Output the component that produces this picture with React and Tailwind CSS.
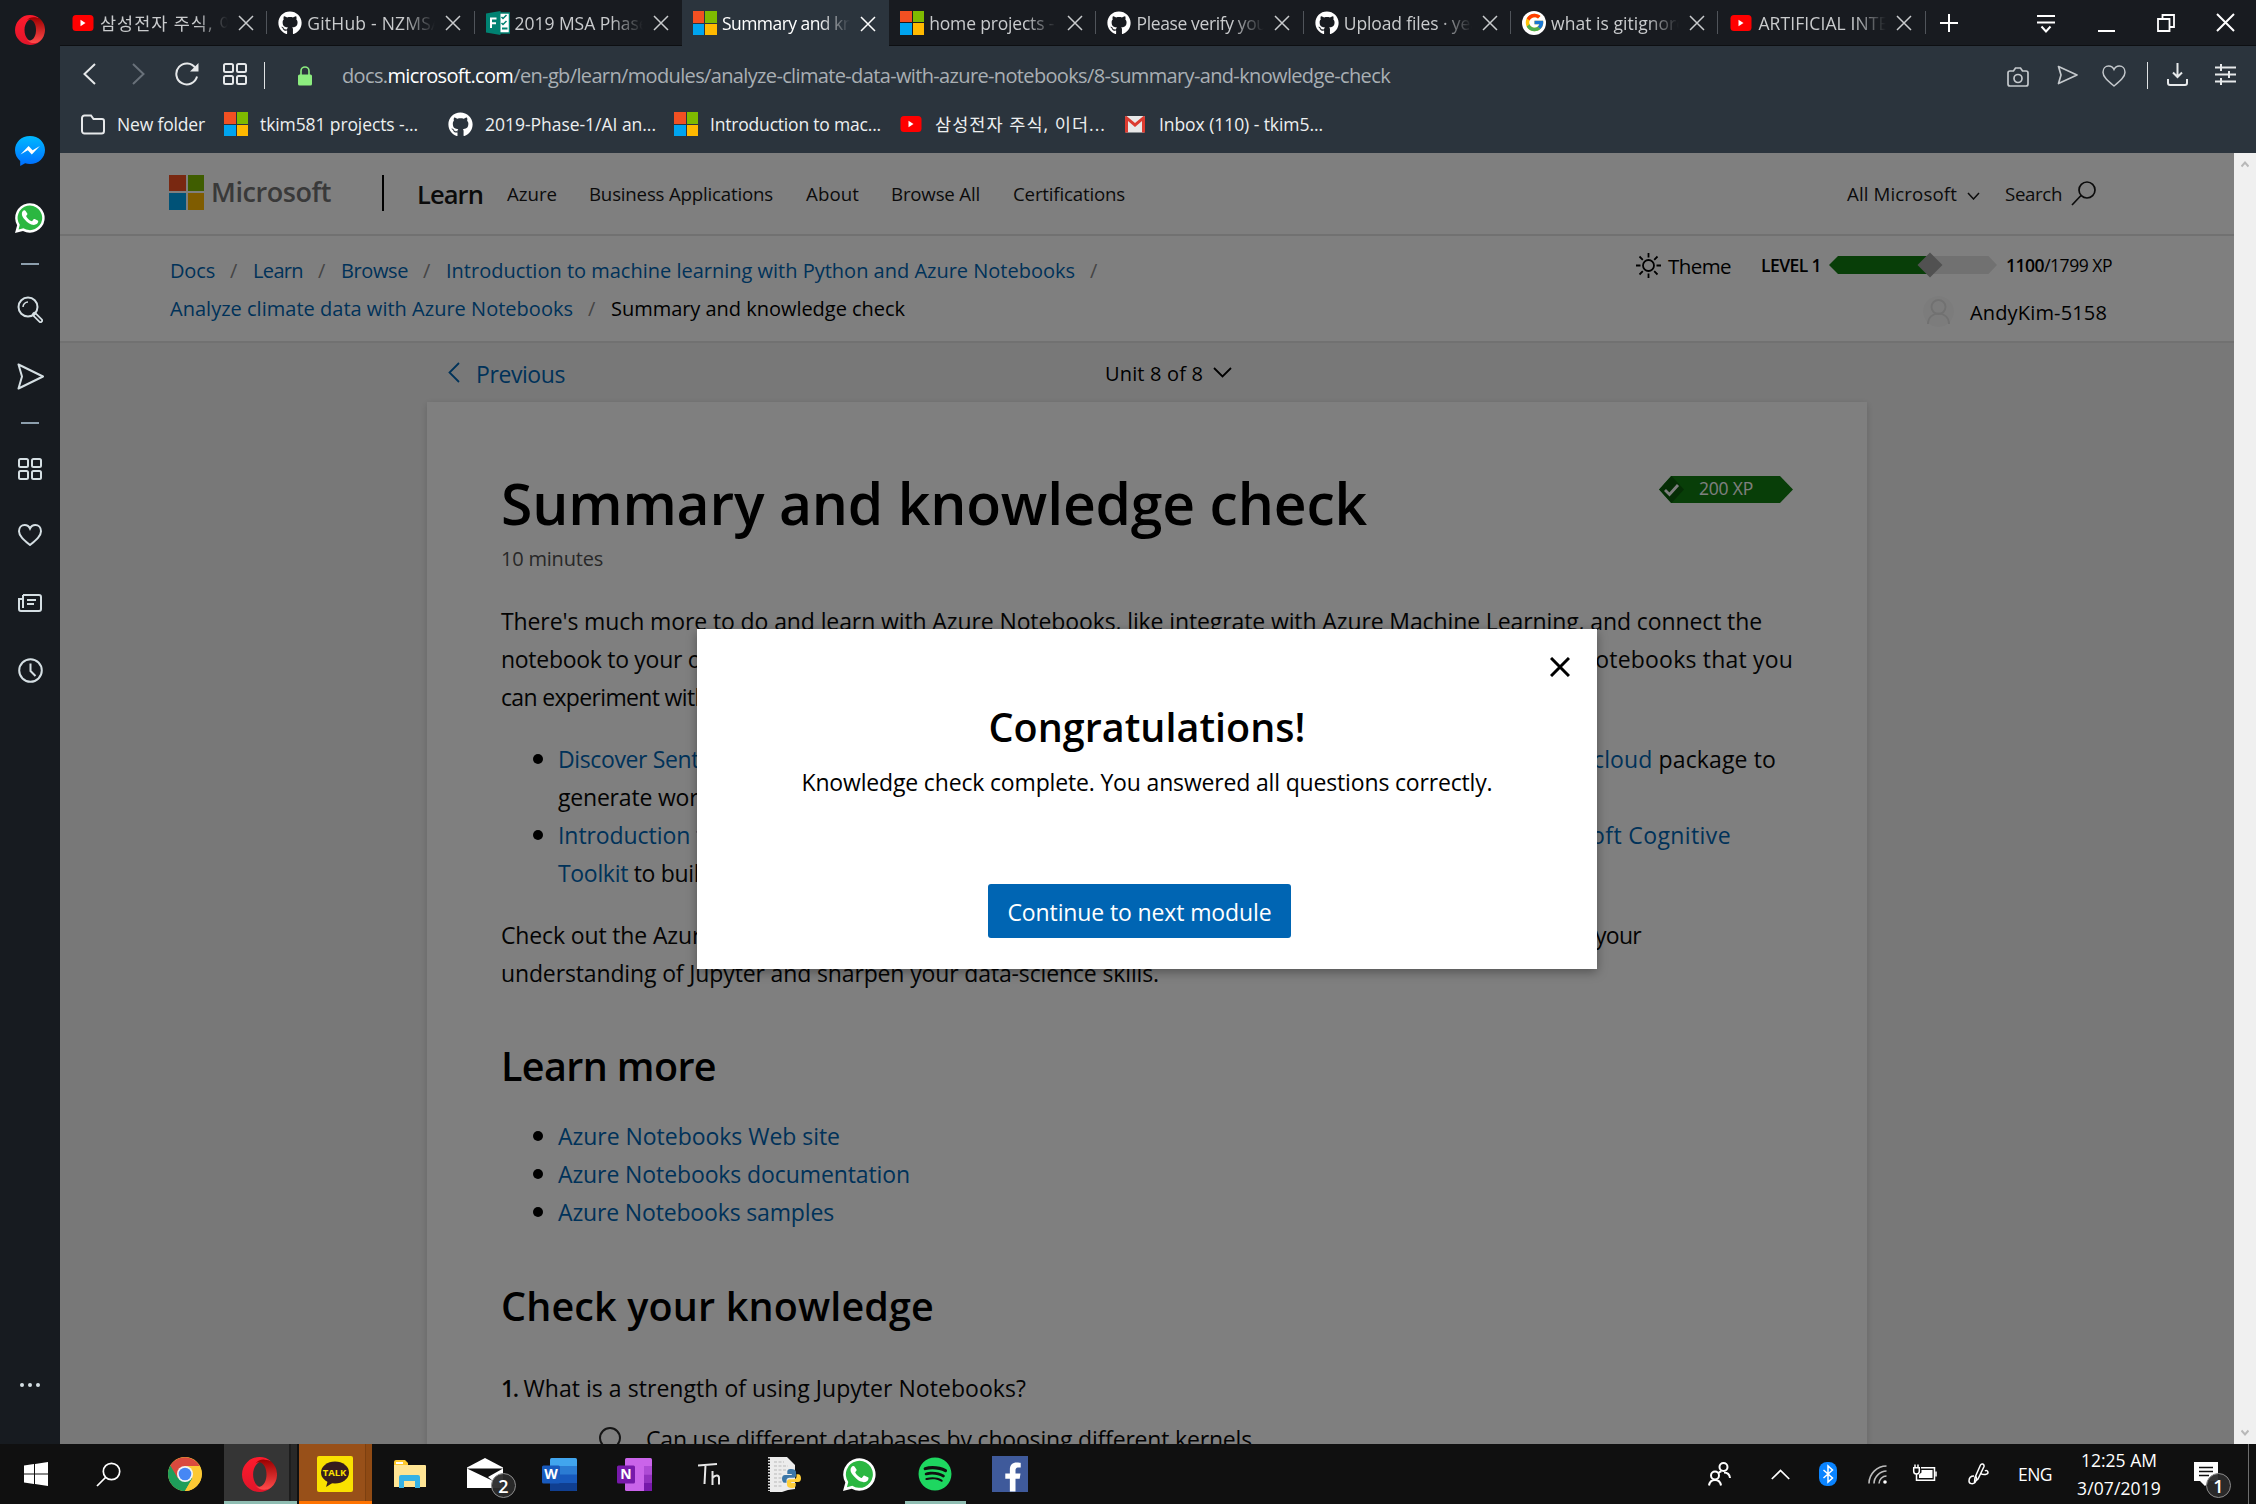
import React, { useLayoutEffect, useRef } from "react";
import { FaGithub, FaSpotify, FaFacebookF } from "react-icons/fa";
import { FcGoogle } from "react-icons/fc";

/* A single line of text whose letters are spread or tightened to fill `w` pixels. */
function Line({ w, className = "", children }) {
  const ref = useRef(null);
  useLayoutEffect(() => {
    const el = ref.current;
    el.style.letterSpacing = "0px";
    const natural = el.getBoundingClientRect().width;
    const count = el.textContent.length;
    el.style.letterSpacing = `${(w - natural) / count}px`;
  }, [w, children]);
  return (
    <span className={`block shrink-0 whitespace-pre ${className}`} style={{ width: w }}>
      <span ref={ref} className="inline-block">{children}</span>
    </span>
  );
}

function Svg({ w, h, className = "", children, ...rest }) {
  return (
    <svg width={w} height={h} viewBox={`0 0 ${w} ${h}`} className={`block shrink-0 ${className}`} fill="none" stroke="currentColor" strokeWidth="2" {...rest}>
      {children}
    </svg>
  );
}

/* ---------- brand marks ---------- */

const MsLogo = ({ className = "size-6 gap-px" }) => (
  <span className={`grid shrink-0 grid-cols-2 grid-rows-2 ${className}`}>
    <span className="bg-[#f25022]" />
    <span className="bg-[#7fba00]" />
    <span className="bg-[#00a4ef]" />
    <span className="bg-[#ffb900]" />
  </span>
);

const YouTube = () => (
  <Svg w={24} h={24} stroke="none">
    <rect x="1.5" y="4" width="21" height="16" rx="3.5" fill="#f00" />
    <path d="M9.5 8.8v6.4l5-3.2z" fill="#fff" />
  </Svg>
);

const Gmail = () => (
  <Svg w={24} h={24} stroke="none">
    <rect x="2" y="4" width="20" height="16.5" rx="1.5" fill="#e8e8e8" />
    <path d="M2 5.5C2 4.6 2.6 4 3.5 4L12 11l8.500-7c.9 0 1.500.6 1.500 1.500v15h-3V9l-7 6-7-6v11.500H2z" fill="#dc3b30" />
  </Svg>
);

const Forms = () => (
  <Svg w={24} h={24} stroke="none">
    <rect x="13" y="2" width="10.500" height="20" fill="#fff" stroke="#008272" strokeWidth="1.500" />
    <path d="M15.500 6l1.500 1.500 3.500-3.500M15.500 12l1.500 1.500 3.500-3.500" stroke="#008272" strokeWidth="1.500" />
    <path d="M16 17.500h5.500" stroke="#008272" strokeWidth="2" />
    <path d="M0 2.500L14.500 0v24L0 21.500z" fill="#008272" />
    <path d="M5 17V7.500h5.500M5 12.200h5" stroke="#fff" strokeWidth="2" />
  </Svg>
);

const Opera = ({ size = 30, id }) => (
  <svg width={size} height={size} viewBox="0 0 30 30" className="block shrink-0">
    <defs>
      <linearGradient id={`${id}a`} x1="0" y1="0" x2="0" y2="1">
        <stop offset="0" stopColor="#ff1b2d" />
        <stop offset="1" stopColor="#e0152a" />
      </linearGradient>
      <linearGradient id={`${id}b`} x1="0" y1="0" x2="0" y2="1">
        <stop offset="0" stopColor="#9c0000" />
        <stop offset="1" stopColor="#ff4b4b" />
      </linearGradient>
    </defs>
    <path d="M15 0a15 15 0 1 0 0 30 15 15 0 0 0 10-3.800c-7.500 3.500-15.500-1.500-15.500-11.200S17.500.300 25 3.800A15 15 0 0 0 15 0z" fill={`url(#${id}a)`} />
    <path d="M11.500 5.500C13.500 3 16.500 1.800 19.500 2.300c2.200.3 4 1 5.500 1.500a15 15 0 0 1 0 22.400c-4.500 3-10 2.500-13.500-1.700 1.200.9 2.400 1.200 3.500 1 4-.8 6-5.500 6-10.500s-2-9.700-6-10.500c-1.100-.2-2.300.1-3.500 1z" fill={`url(#${id}b)`} />
  </svg>
);

const WhatsApp = ({ size = 30 }) => (
  <svg width={size} height={size} viewBox="0 0 32 32" className="block shrink-0">
    <path d="M0 32l2.300-8.200A15.700 15.700 0 1 1 8.500 29.800z" fill="#fff" />
    <path d="M3.800 28.300l1.300-5A13.100 13.100 0 1 1 9 27z" fill="#2bb741" />
    <path d="M11.300 8.500c-.5-1-1-.9-1.700-.8-1.200.4-2.300 1.900-2.300 3.900 0 2.100 1.600 4.300 3.300 6.200 2.500 2.800 5.500 5.500 9.500 5.600 2.200 0 4.400-1.300 4.600-3.300.1-.8.100-1.100-.5-1.400l-3.200-1.600c-.5-.2-.9-.1-1.200.3l-1.400 1.700c-.3.400-.7.300-1.200.1-2.300-1-4.200-2.900-5.200-4.800-.2-.4 0-.7.200-1l.9-1.200c.2-.4.200-.6 0-1z" fill="#fff" />
  </svg>
);

const Messenger = () => (
  <svg width="30" height="30" viewBox="0 0 30 30" className="block">
    <defs>
      <linearGradient id="msgr" x1="0" y1="0" x2="0" y2="1">
        <stop offset="0" stopColor="#00b9ff" />
        <stop offset="1" stopColor="#006dff" />
      </linearGradient>
    </defs>
    <path d="M15 0C6.500 0 0 6.200 0 14c0 4.500 2 8.400 5.200 10.900V30l4.900-2.700c1.500.5 3.200.7 4.900.7 8.500 0 15-6.200 15-14S23.500 0 15 0z" fill="url(#msgr)" />
    <path d="M5.500 18.500l8.100-8.500 4 4.200 7.300-4.200-8.100 8.500-4-4.200z" fill="#fff" />
  </svg>
);

/* ---------- line icons ---------- */

const Cross = ({ size = 16, className = "", sw = 1.5 }) => (
  <Svg w={size} h={size} className={className} strokeWidth={sw}>
    <path d={`M1 1L${size - 1} ${size - 1}M${size - 1} 1L1 ${size - 1}`} />
  </Svg>
);

const Tiles = () => (
  <Svg w={24} h={22} strokeWidth="2">
    <rect x="1" y="1" width="9" height="8" rx="1.500" />
    <rect x="14" y="1" width="9" height="8" rx="1.500" />
    <rect x="1" y="13" width="9" height="8" rx="1.500" />
    <rect x="14" y="13" width="9" height="8" rx="1.500" />
  </Svg>
);

const Heart = ({ sw = 1.7 }) => (
  <Svg w={24} h={22} strokeWidth={sw}>
    <path d="M12 21C6 16 1 12 1 7.200 1 3.500 3.500 1 6.700 1 9 1 11 2.300 12 4.500 13 2.300 15 1 17.300 1 20.500 1 23 3.500 23 7.200 23 12 18 16 12 21z" />
  </Svg>
);

/* ---------- browser chrome ---------- */

const tabs = [
  { icon: <YouTube />, title: "삼성전자 주식, 이", wide: 136 },
  { icon: <FaGithub className="size-6 text-white" />, title: "GitHub - NZMSA", wide: 135 },
  { icon: <Forms />, title: "2019 MSA Phase", wide: 134 },
  { icon: <MsLogo />, title: "Summary and kn", wide: 131 },
  { icon: <MsLogo />, title: "home projects -", wide: 125 },
  { icon: <FaGithub className="size-6 text-white" />, title: "Please verify your", wide: 137 },
  { icon: <FaGithub className="size-6 text-white" />, title: "Upload files · yea", wide: 136 },
  { icon: <span className="grid size-6 place-items-center rounded-full bg-white"><FcGoogle className="size-[21px]" /></span>, title: "what is gitignore", wide: 135 },
  { icon: <YouTube />, title: "ARTIFICIAL INTE", wide: 130 },
];

function TabBar() {
  return (
    <div className="flex h-[46px] items-stretch border-b border-[#0d0f12] bg-[#181b20]">
      {tabs.map((t, i) => (
        <div key={i} className={`relative flex w-[207.300px] items-center pl-[11px] ${i === 3 ? "-mb-px bg-[#2b343d] text-white" : "text-[#c9cbcd]"}`}>
          {t.icon}
          <div className="ml-[5px] w-[128px] overflow-hidden [mask-image:linear-gradient(to_right,#000_75%,transparent)]">
            <Line w={t.wide} className="text-[17.500px] leading-[30px]">{t.title}</Line>
          </div>
          <Cross className="ml-[10px] mt-px" />
          {i !== 3 && i !== 2 && <span className="absolute right-0 top-[11px] h-[23px] w-px bg-[#50545a]" />}
        </div>
      ))}
      <div className="flex flex-1 items-center pl-[14px] text-white">
        <Svg w={18} h={18}><path d="M9 0v18M0 9h18" /></Svg>
        <Svg w={18} h={20} className="ml-[79px] mt-[3px]"><path d="M0 2h18M0 8.500h18M4.500 12.500l4.500 5 4.500-5" /></Svg>
        <span className="ml-[43px] mt-[17px] h-[2px] w-[17px] bg-white" />
        <Svg w={18} h={18} className="ml-[42px]" strokeWidth="1.800"><path d="M1 5h11.500v12H1zM5.500 5V1H17v12h-4.500" /></Svg>
        <Cross size={19} sw={2} className="ml-[41px]" />
      </div>
    </div>
  );
}

function AddressBar() {
  return (
    <div className="flex h-[60px] items-center pl-[22px] text-[#e6e8ea]">
      <Svg w={15} h={24} className="-mt-1"><path d="M13 2L2.500 12 13 22" /></Svg>
      <Svg w={15} h={24} className="-mt-1 ml-[34px] text-[#69717a]"><path d="M2 2l10.500 10L2 22" /></Svg>
      <Svg w={25} h={24} className="-mt-1 ml-[29px]">
        <path d="M20.500 6A10.500 10.500 0 1 0 22 14.500" />
        <path d="M23.500 1v8.500H15z" fill="currentColor" stroke="none" />
      </Svg>
      <div className="-mt-1 ml-[23px]"><Tiles /></div>
      <span className="-mt-0.5 ml-[17px] h-[27px] w-px bg-[#dfe2e4]" />
      <Svg w={14} h={20} className="ml-[33px] text-[#8ced7f]" strokeWidth="1.600">
        <path d="M3 9V5a4 4 0 0 1 8 0v4" />
        <rect x="0" y="8.500" width="14" height="11" rx="1.500" fill="currentColor" stroke="none" />
      </Svg>
      <Line w={1048} className="ml-[30px] text-[20px] leading-[30px] text-[#a9afb4]">
        docs.<span className="text-white">microsoft.com</span>/en-gb/learn/modules/analyze-climate-data-with-azure-notebooks/8-summary-and-knowledge-check
      </Line>
      <div className="-mt-0.5 ml-auto flex items-center pr-[20px]">
        <Svg w={22} h={20} className="mt-1 text-[#c4c8cc]" strokeWidth="1.700">
          <path d="M3 4h3.500l2-3h5l2 3H19a2 2 0 0 1 2 2v11a2 2 0 0 1-2 2H3a2 2 0 0 1-2-2V6a2 2 0 0 1 2-2z" />
          <circle cx="11" cy="11.500" r="4" />
        </Svg>
        <Svg w={21} h={20} className="ml-[28px] text-[#c4c8cc]" strokeWidth="1.700"><path d="M1.500 1.500L20 10 1.500 18.500 4 10z" strokeLinejoin="round" /></Svg>
        <div className="ml-[24px] mt-[2px] text-[#c4c8cc]"><Heart sw={1.5} /></div>
        <span className="ml-[21px] h-[27px] w-px bg-[#dfe2e4]" />
        <Svg w={21} h={23} className="-mt-0.5 ml-[19px]"><path d="M10.500 0v14M6 9.500l4.500 4.500L15 9.500M1 16v4a2 2 0 0 0 2 2h15a2 2 0 0 0 2-2v-4" /></Svg>
        <Svg w={21} h={23} className="-mt-0.5 ml-[27px]"><path d="M0 4.500h21M0 11.500h21M0 18.500h21M6 1v7M14 8v7M6 15v7" /></Svg>
      </div>
    </div>
  );
}

function Bookmark({ icon, w, gap, children }) {
  return (
    <div className={`flex items-center ${gap}`}>
      {icon}
      <Line w={w} className="ml-3 text-[17.500px] leading-[26px] text-[#edeff0]">{children}</Line>
    </div>
  );
}

function Bookmarks() {
  return (
    <div className="flex h-[47px] items-center pb-[11px] pl-[21px]">
      <Bookmark w={88} gap="mr-[19px]" icon={
        <Svg w={24} h={21} className="text-[#e6e8ea]"><path d="M1 4V17a2.500 2.500 0 0 0 2.500 2.500h17A2.500 2.500 0 0 0 23 17V7a2 2 0 0 0-2-2h-8.500L10 1.500H3.500A2.500 2.500 0 0 0 1 4z" /></Svg>
      }>New folder</Bookmark>
      <Bookmark w={158} gap="mr-[30px]" icon={<MsLogo />}>tkim581 projects -...</Bookmark>
      <Bookmark w={171} gap="mr-[18px]" icon={<FaGithub className="size-[25px] text-white" />}>2019-Phase-1/AI an...</Bookmark>
      <Bookmark w={171} gap="mr-[18px]" icon={<MsLogo />}>Introduction to mac...</Bookmark>
      <Bookmark w={171} gap="mr-[17px]" icon={<YouTube />}>삼성전자 주식, 이더...</Bookmark>
      <Bookmark w={164} gap="" icon={<Gmail />}>Inbox (110) - tkim5...</Bookmark>
    </div>
  );
}

function Sidebar() {
  return (
    <aside className="flex h-full w-[60px] shrink-0 flex-col items-center bg-[#171b20] pt-[15px] text-[#d5dfe3]">
      <Opera id="side" />
      <div className="mt-[91px]"><Messenger /></div>
      <div className="mt-[37px]"><WhatsApp /></div>
      <span className="mt-[30px] h-[2px] w-[18px] bg-[#8d9fad]" />
      <Svg w={26} h={27} className="mt-[31px]">
        <circle cx="11" cy="11" r="9.500" />
        <path d="M6 11a5 5 0 0 1 5-5" strokeWidth="1.500" />
        <path d="M17.500 18.500l6 6" strokeWidth="5" strokeLinecap="round" />
        <path d="M18.500 19.500l5 5" strokeWidth="1.500" stroke="#171b20" strokeLinecap="round" />
      </Svg>
      <Svg w={27} h={27} className="mt-[40px]"><path d="M1.500 1.500L26 13.500l-24.500 12 3.500-12z" strokeLinejoin="round" /></Svg>
      <span className="mt-[32px] h-[2px] w-[18px] bg-[#8d9fad]" />
      <div className="mt-[34px]"><Tiles /></div>
      <div className="mt-[44px]"><Heart sw={2} /></div>
      <Svg w={24} h={18} className="mt-[48px]">
        <path d="M5 1h16a2 2 0 0 1 2 2v12a2 2 0 0 1-2 2H3a2 2 0 0 1-2-2V5h4M5 1v13M9 6h9M9 10h7" />
      </Svg>
      <Svg w={25} h={25} className="mt-[46px]"><circle cx="12.500" cy="12.500" r="11.300" /><path d="M12.500 5.500V13l5 5" /></Svg>
      <div className="mt-auto flex gap-1 pb-[57px]">
        <span className="size-1 rounded-full bg-current" />
        <span className="size-1 rounded-full bg-current" />
        <span className="size-1 rounded-full bg-current" />
      </div>
    </aside>
  );
}

/* ---------- page ---------- */

function SiteHeader() {
  const nav = [
    ["Azure", 50, "ml-[24px]"],
    ["Business Applications", 184, "ml-[32px]"],
    ["About", 53, "ml-[33px]"],
    ["Browse All", 89, "ml-[32px]"],
    ["Certifications", 112, "ml-[33px]"],
  ];
  return (
    <header className="flex h-[83px] items-center border-b-2 border-[#e3e3e3] pb-[3px] pl-[109px] pr-[138px] text-[#171717]">
      <MsLogo className="size-[35px] gap-[2px]" />
      <Line w={120} className="ml-[7px] text-[27px] font-semibold leading-[40px] text-[#737373]">Microsoft</Line>
      <span className="ml-[51px] mt-[2px] h-[36px] w-[2px] bg-black" />
      <Line w={66} className="ml-[33px] mt-[3px] text-[25.500px] font-semibold leading-[40px]">Learn</Line>
      {nav.map(([t, w, m]) => (
        <Line key={t} w={w} className={`mt-[3px] text-[18.700px] leading-[30px] ${m}`}>{t}</Line>
      ))}
      <Line w={110} className="ml-auto mt-[3px] text-[18.700px] leading-[30px]">All Microsoft</Line>
      <Svg w={13} h={8} className="ml-[10px] mt-[8px]" strokeWidth="1.500"><path d="M1 1l5.500 6L12 1" /></Svg>
      <Line w={57} className="ml-[25px] mt-[3px] text-[18.700px] leading-[30px]">Search</Line>
      <Svg w={25} h={25} className="ml-[9px] mt-[2px]" strokeWidth="1.700"><circle cx="16" cy="9" r="8" /><path d="M10 14.500L1 24" /></Svg>
    </header>
  );
}

const Slash = ({ className }) => <span className={`block text-[20px] text-[#8a8a8a] ${className}`}>/</span>;

function Crumbs() {
  return (
    <section className="flex h-[107px] justify-between border-b-2 border-[#e3e3e3] pl-[110px] pr-[122px] text-[20px] leading-[38px]">
      <div className="pt-[16px] text-[#0065b3]">
        <div className="flex">
          <Line w={45}>Docs</Line><Slash className="ml-[15px] w-[23px]" />
          <Line w={50}>Learn</Line><Slash className="ml-[15px] w-[23px]" />
          <Line w={67}>Browse</Line><Slash className="ml-[15px] w-[23px]" />
          <Line w={629}>Introduction to machine learning with Python and Azure Notebooks</Line><Slash className="ml-[15px]" />
        </div>
        <div className="flex">
          <Line w={403}>Analyze climate data with Azure Notebooks</Line><Slash className="ml-[15px] w-[23px]" />
          <Line w={294} className="text-black">Summary and knowledge check</Line>
        </div>
      </div>
      <div className="flex flex-col items-end pt-[14px] leading-[28px]">
        <div className="flex items-center">
          <Svg w={25} h={25} className="text-black" strokeWidth="1.800">
            <circle cx="12.500" cy="12.500" r="5.500" />
            <path d="M12.500 0v4.500M12.500 20.500V25M0 12.500h4.500M20.500 12.500H25M3.500 3.500l3.300 3.300M18.200 18.200l3.300 3.300M3.500 21.500l3.300-3.300M18.200 6.800l3.300-3.300" />
          </Svg>
          <Line w={63} className="ml-[7px] mt-[2px] text-[20.500px]">Theme</Line>
          <Line w={60} className="ml-[30px] text-[17.500px] font-semibold">LEVEL 1</Line>
          <Svg w={168} h={26} className="ml-[8px]" stroke="none">
            <path d="M98 4h61.500l8.500 9-8.500 9H98z" fill="#e3e3e3" />
            <path d="M9 4h92v18H9l-9-9z" fill="#107c10" />
            <path d="M101 .5L113.500 13 101 25.500 88.500 13z" fill="#a2a2a2" />
          </Svg>
          <Line w={106} className="ml-[9px] text-[17.500px]"><span className="font-semibold">1100</span>/1799 XP</Line>
        </div>
        <div className="mt-[16px] flex items-center pr-[5px]">
          <Svg w={31} h={31} stroke="none">
            <circle cx="15.500" cy="15.500" r="15.500" fill="#f9f9f9" />
            <g stroke="#e3e3e3" fill="none" strokeWidth="2"><circle cx="15.500" cy="11" r="7" /><path d="M5 28c0-14 21-14 21 0" /></g>
          </Svg>
          <Line w={137} className="ml-[16px] mt-[2px] text-[20px]">AndyKim-5158</Line>
        </div>
      </div>
    </section>
  );
}

const Item = ({ children }) => (
  <li className="flex items-start">
    <span className="ml-[32px] mr-[15px] mt-[14px] size-[10px] shrink-0 rounded-full bg-black" />
    <div>{children}</div>
  </li>
);

/* A wrapped line whose two ends stay visible on either side of the dialog. */
const Split = ({ w, left, right }) => (
  <div className="flex justify-between" style={{ width: w }}>{left}{right}</div>
);

function Article() {
  return (
    <article className="ml-[367px] h-[1100px] w-[1440px] bg-white pl-[74px] pt-[65px] text-[23px] leading-[38px] text-[#070707] shadow-[0_2px_7px_rgba(0,0,0,0.16)]">
      <div className="flex justify-between pr-[74px]">
        <h1><Line w={866} className="text-[57px] font-semibold leading-[72px] text-black">Summary and knowledge check</Line></h1>
        <div className="mt-[9px] flex h-[27px] w-[134px] items-center bg-[#107c10] [clip-path:polygon(12px_0,121px_0,100%_50%,121px_100%,12px_100%,0_50%)]">
          <Svg w={25} h={27} stroke="none">
            <path d="M12.500 0L25 13.500 12.500 27 0 13.500z" fill="#0b5a0b" />
            <path d="M6 14l4.500 4.500L19 9" stroke="#fff" strokeWidth="2.800" />
          </Svg>
          <Line w={54} className="mb-[2px] ml-[15px] text-[17.500px] leading-[25px] text-white">200 XP</Line>
        </div>
      </div>
      <Line w={102} className="mt-[5px] text-[20px] leading-[30px] text-[#505050]">10 minutes</Line>

      <div className="mt-[28px]">
        <Line w={1261}>There's much more to do and learn with Azure Notebooks, like integrate with Azure Machine Learning, and connect the</Line>
        <Split w={1292} left={<Line w={284}>notebook to your own data</Line>} right={<Line w={212}>notebooks that you</Line>} />
        <Line w={256}>can experiment with now</Line>
      </div>

      <ul className="mt-[24px] text-[#0065b3]">
        <Item>
          <Split w={1218} left={<Line w={212}>Discover Sentiments</Line>} right={<Line w={183}>cloud<span className="text-[#070707]"> package to</span></Line>} />
          <Line w={165} className="text-[#070707]">generate words</Line>
        </Item>
        <Item>
          <Split w={1173} left={<Line w={160}>Introduction to</Line>} right={<Line w={214}>Microsoft Cognitive</Line>} />
          <Line w={155}>Toolkit<span className="text-[#070707]"> to build</span></Line>
        </Item>
      </ul>

      <div className="mt-[24px]">
        <Split w={1140} left={<Line w={213}>Check out the Azure</Line>} right={<Line w={46}>your</Line>} />
        <Line w={658}>understanding of Jupyter and sharpen your data-science skills.</Line>
      </div>

      <h2 className="mt-[48px]"><Line w={215} className="text-[39.500px] font-semibold leading-[52px] text-black">Learn more</Line></h2>
      <ul className="mt-[25px] text-[#0065b3]">
        <Item><Line w={282}>Azure Notebooks Web site</Line></Item>
        <Item><Line w={352}>Azure Notebooks documentation</Line></Item>
        <Item><Line w={276}>Azure Notebooks samples</Line></Item>
      </ul>

      <h2 className="mt-[49px]"><Line w={433} className="text-[39.500px] font-semibold leading-[52px] text-black">Check your knowledge</Line></h2>
      <Line w={525} className="mt-[37px]"><span className="font-semibold tracking-[-1.500px]">1.</span> What is a strength of using Jupyter Notebooks?</Line>
      <div className="mt-[13px] flex">
        <span className="ml-[98px] mt-[7px] size-[22px] rounded-full border-2 border-[#2a2a2a]" />
        <Line w={606} className="ml-[25px]">Can use different databases by choosing different kernels</Line>
      </div>
    </article>
  );
}

function Dialog() {
  return (
    <div className="absolute left-[637px] top-[476px] flex h-[340px] w-[900px] flex-col items-center bg-white text-black shadow-[0_3px_10px_rgba(0,0,0,0.35)]">
      <Cross size={20} sw={3} className="absolute right-[27px] top-[28px]" />
      <Line w={317} className="mt-[72px] text-[39.500px] font-semibold leading-[52px]">Congratulations!</Line>
      <Line w={691} className="mt-[10px] text-[23px] leading-[38px]">Knowledge check complete. You answered all questions correctly.</Line>
      <button className="mr-[15px] mt-[83px] flex h-[54px] w-[303px] items-center justify-center rounded-[3px] bg-[#0065b3] text-[23px] leading-[38px] text-white">
        <Line w={264} className="mt-[2px] text-left">Continue to next module</Line>
      </button>
    </div>
  );
}

function Page() {
  return (
    <main className="relative flex min-h-0 flex-1 overflow-hidden">
      <div className="relative w-[2174px] shrink-0 bg-[#f1f1f1]">
        <div className="bg-white">
          <SiteHeader />
          <Crumbs />
        </div>
        <div className="flex h-[59px] items-center pl-[388px]">
          <Svg w={12} h={21} className="text-[#0065b3]" strokeWidth="1.800"><path d="M11 1L1.500 10.500 11 20" /></Svg>
          <Line w={89} className="ml-[16px] mt-[4px] text-[23px] text-[#0065b3]">Previous</Line>
          <Line w={98} className="ml-[540px] mt-[2px] text-[20px] text-black">Unit 8 of 8</Line>
          <Svg w={19} h={11} className="ml-[10px] text-black" strokeWidth="1.800"><path d="M1 1l8.500 8.500L18 1" /></Svg>
        </div>
        <Article />
        <div className="absolute inset-0 bg-black/50" />
      </div>
      <div className="flex w-[22px] flex-col items-center justify-between bg-[#f0f0f0] py-[7px] text-[#b8b8b8]">
        <Svg w={8} h={8}><path d="M0.500 6.500L4 2.500l3.500 4" /></Svg>
        <Svg w={8} h={8}><path d="M0.500 1.500L4 5.500l3.500-4" /></Svg>
      </div>
      <Dialog />
    </main>
  );
}

/* ---------- taskbar ---------- */

const Count = ({ children, className }) => (
  <span className={`absolute grid size-[25px] place-items-center rounded-full border border-[#8c8c8c] bg-[#2b2b2b]/95 text-[18px] font-semibold leading-none text-white ${className}`}>{children}</span>
);

function Taskbar() {
  const cell = "relative flex h-full w-[75px] shrink-0 items-center justify-center";
  return (
    <footer className="flex h-[60px] items-center bg-[#101010] text-white">
      <div className="flex h-full w-[72px] items-center justify-center">
        <Svg w={24} h={24} fill="#fff" stroke="none"><path d="M0 3.500l10-1.400V11.500H0zM11 2L24 0v11.500H11zM0 12.500h10v9.400L0 20.500zM11 12.500h13V24l-13-2z" /></Svg>
      </div>
      <div className="flex h-full w-[75px] items-center justify-center pr-[3px]">
        <Svg w={25} h={25} strokeWidth="1.700"><circle cx="15.500" cy="9.500" r="8.200" /><path d="M9.500 15.500L1 24" /></Svg>
      </div>
      <div className={cell}>
        <svg width="34" height="34" viewBox="0 0 34 34">
          <circle cx="17" cy="17" r="17" fill="#fcc934" />
          <path d="M17 17L2.300 8.500A17 17 0 0 0 17 34l7.400-12.800z" fill="#1e9e5a" />
          <path d="M17 9h14.700A17 17 0 0 0 2.300 8.500l7.500 12.700z" fill="#da4a3e" />
          <path d="M31.700 9H17l7.400 12.300L17 34A17 17 0 0 0 31.700 9z" fill="#fcc934" />
          <circle cx="17" cy="17" r="8" fill="#f4f4f4" />
          <circle cx="17" cy="17" r="6.300" fill="#4687f4" />
        </svg>
      </div>
      <div className="flex h-full w-[75px] shrink-0">
        <div className="relative ml-[2px] flex h-full w-[73px] border-b-[3px] border-[#8fbdb2] bg-[#282828]">
          <div className="flex w-[67px] items-center justify-center border-r-2 border-[#1d1d1d] bg-[#353535] pl-[6px] pt-[3px]"><Opera size={35} id="task" /></div>
        </div>
      </div>
      <div className="flex h-full w-[75px] shrink-0">
        <div className="ml-[2px] flex h-full w-[73px] border-b-[3px] border-[#ff7300] bg-[#8f4a14]">
          <div className="flex w-[67px] items-center justify-center border-r border-[#7d4010] bg-[#985019] pl-[5px] pt-[3px]">
            <span className="relative grid size-9 place-items-center rounded-[2px] bg-[#fae100]">
              <Svg w={28} h={26} stroke="none"><ellipse cx="14" cy="11.500" rx="14" ry="11" fill="#371d1e" /><path d="M7 19l-2 7 8-5z" fill="#371d1e" /></Svg>
              <span className="absolute inset-x-0 top-[11px] text-center text-[9.500px] font-bold leading-[12px] text-[#fae100]">TALK</span>
            </span>
          </div>
        </div>
      </div>
      <div className={cell}>
        <Svg w={32} h={29} stroke="none"><path d="M0 2a2 2 0 0 1 2-2h9l3 3v6H0z" fill="#fdc92e" /><rect x="2" y="2" width="7" height="2" fill="#fff" /><path d="M0 5h31a1 1 0 0 1 1 1v21H0z" fill="#ffe594" /><path d="M5 28V17a2 2 0 0 1 2-2h17a2 2 0 0 1 2 2v11h-5v-7H10v7z" fill="#35b2e6" /></Svg>
      </div>
      <div className={cell}>
        <Svg w={36} h={30} stroke="none" className="mb-[2px]"><path d="M0 9.500L18 0l18 9.500V30H0z" fill="#fff" /><path d="M0 10.500h36L21 19l5 4z" fill="#101010" /></Svg>
        <Count className="left-[44px] top-[29px]">2</Count>
      </div>
      <div className={cell}>
        <Svg w={35} h={33} stroke="none"><rect x="8" width="27" height="33" rx="1.500" fill="#41a5ee" /><path d="M8 8h27v9H8z" fill="#2b7cd3" /><path d="M8 16.500h27V25H8z" fill="#185abd" /><path d="M8 25h27v7a1 1 0 0 1-1 1H8z" fill="#103f91" /><rect y="7.500" width="18" height="18" rx="1.500" fill="#185abd" /></Svg>
        <span className="absolute left-[19px] top-[21px] w-[20px] text-center text-[14px] font-bold leading-[18px]">W</span>
      </div>
      <div className={cell}>
        <Svg w={35} h={33} stroke="none"><rect x="8" width="27" height="33" rx="1.500" fill="#ca64ea" /><path d="M27 8h8v8.500h-8z" fill="#ae4bd5" /><path d="M27 16.500h8v8h-8z" fill="#9332bf" /><path d="M27 24.500h8V33h-8z" fill="#7719aa" /><rect y="7.500" width="18" height="18" rx="1.500" fill="#7719aa" /></Svg>
        <span className="absolute left-[19px] top-[21px] w-[20px] text-center text-[14px] font-bold leading-[18px]">N</span>
      </div>
      <div className={cell}>
        <Svg w={23} h={23} className="mr-[1px] text-[#e8e8e8]" strokeWidth="2"><path d="M0 2.500L19 1M7.500 2l-1 19M14.500 8v14M14.500 15c3-3.500 6.500-3 6.500 0v6.500" /></Svg>
      </div>
      <div className={cell}>
        <Svg w={34} h={35} stroke="none"><path d="M2 0h17l8 8v24l-7 1-6 2H2z" fill="#ececec" /><path d="M1 0v34" stroke="#d8d8d8" strokeDasharray="1.500 1.500" /><path d="M6 5h10M6 9h14M6 13h12M6 17h9M6 21h8M6 25h10M6 29h9" stroke="#b9b9b9" strokeWidth="1" strokeDasharray="3 1.500" /></Svg>
        <svg width="19" height="19" viewBox="0 0 19 19" className="absolute left-[35px] top-[25px]">
          <path d="M9.300 0C5.500 0 5.300 1.500 5.300 3v2h4.500v1H3C1 6 0 7.500 0 9.700s1 4 2.800 4H4.500v-2.200c0-1.700 1.300-2.700 2.700-2.700h4.500c1.400 0 2.300-1 2.300-2.300V3c0-2-2-3-4.700-3z" fill="#3c77a8" />
          <path d="M9.700 19c3.800 0 4-1.500 4-3v-2H9.200v-1H16c2 0 3-1.500 3-3.700s-1-4-2.800-4h-1.700v2.200c0 1.700-1.300 2.700-2.700 2.700H7.300c-1.400 0-2.300 1-2.300 2.300V16c0 2 2 3 4.700 3z" fill="#ffcf3a" />
        </svg>
      </div>
      <div className={cell}><WhatsApp size={33} /></div>
      <div className={cell}>
        <FaSpotify className="size-[34px] text-[#1ed760]" />
        <span className="absolute bottom-0 left-[8px] h-[3px] w-[61px] bg-[#8fbdb2]" />
      </div>
      <div className={cell}>
        <span className="flex size-9 items-end justify-end bg-[#3f5a9b] pr-[6px]"><FaFacebookF className="-mb-px h-[32px] w-[18px]" /></span>
      </div>

      <div className="ml-auto flex h-full items-center">
        <Svg w={23} h={24} className="-mt-px" strokeWidth="2"><circle cx="15.500" cy="5" r="4" /><path d="M16 10.500c3.500 0 5.500 1.500 6 5.500" /><circle cx="7" cy="13.500" r="4" /><path d="M1 23.500c1-7.500 11-7.500 12 0M10.500 11c1-1 2-1.500 3-1.700" /></Svg>
        <Svg w={19} h={11} className="ml-[40px]" strokeWidth="1.700"><path d="M.8 10L9.500 1.500 18.200 10" /></Svg>
        <Svg w={18} h={24} className="ml-[29px]" stroke="none"><rect width="18" height="24" rx="8" fill="#0a84ff" /><path d="M4.500 8l9 8-4.500 4V4l4.500 4-9 8" stroke="#fff" strokeWidth="1.500" /></Svg>
        <Svg w={19} h={19} className="ml-[31px]" strokeWidth="1.600"><path d="M1 18.500C1 9 9 1 18.500 1M6 18.500C6 12 12 6 18.500 6M11 18.500c0-4 3.500-7.500 7.500-7.500" stroke="#bdbdbd" /><circle cx="17" cy="17" r="1.800" fill="#fff" stroke="none" /></Svg>
        <Svg w={25} h={18} className="mb-[2px] ml-[25px]" strokeWidth="1.500">
          <path d="M9 3.700h13.500v12.500H4.500V10" />
          <path d="M9.500 6h11v8H7v-3.500l2.500-2z" fill="#fff" stroke="none" />
          <path d="M24 7.500v5M1 3.700h7M1.700 3.700v3.500a2.800 2.800 0 0 0 5.600 0V3.700M3 .5v3M6 .5v3" />
        </Svg>
        <Svg w={21} h={22} className="ml-[31px]" strokeWidth="1.500"><path d="M6.500 19L7 14.500 12.500 2c1-2 4-1 3.500 1.500L10 16zM6 13c-3 0-5 2-5 5s4 3.500 6 1.500 1.500-5 1-6M13 10.500c2.500 2 7 1 7-1s-2-2.500-3-1.500" /></Svg>
        <Line w={34} className="ml-[29px] text-[17.500px] leading-[28px]">ENG</Line>
        <div className="-mt-px ml-[25px] flex w-[84px] flex-col items-center text-[17.500px] leading-[28px]">
          <Line w={76}>12:25 AM</Line>
          <Line w={84}>3/07/2019</Line>
        </div>
        <div className="relative ml-[33px] h-full w-[54px]">
          <Svg w={24} h={24} stroke="none" className="mt-[18px]"><path d="M0 0h24v19h-8l-5 5-5-5H0z" fill="#fff" /><path d="M5 5.500h14M5 9.500h14M5 13.500h10" stroke="#101010" strokeWidth="1.500" /></Svg>
          <Count className="left-[12px] top-[29px]">1</Count>
        </div>
        <span className="mr-[7px] h-full w-px bg-[#6e6e6e]" />
      </div>
    </footer>
  );
}

export default function App() {
  return (
    <div className="flex h-[1504px] w-[2256px] flex-col overflow-hidden font-['Open_Sans','Noto_Sans_CJK_KR',sans-serif]">
      <div className="flex h-[1444px] shrink-0">
        <Sidebar />
        <div className="flex min-w-0 flex-1 flex-col bg-[#2b343d]">
          <TabBar />
          <AddressBar />
          <Bookmarks />
          <Page />
        </div>
      </div>
      <Taskbar />
    </div>
  );
}
